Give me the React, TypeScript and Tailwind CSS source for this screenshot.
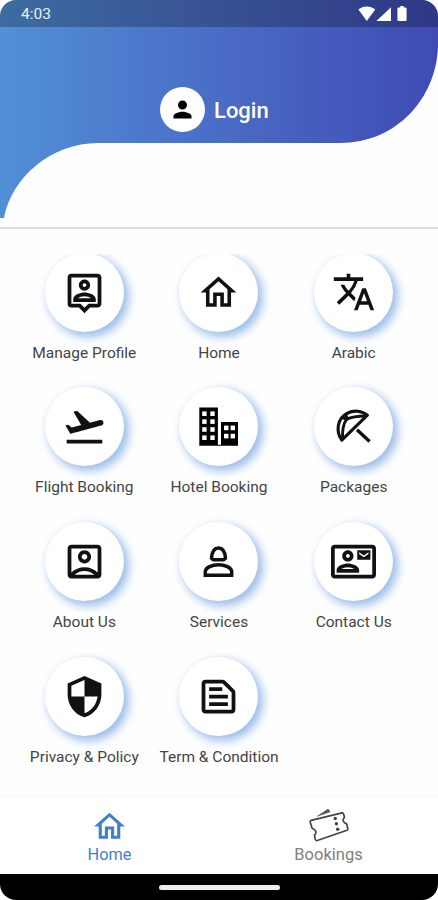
import type { ReactNode } from "react";
import {
  MdOutlineAccountBox,
  MdOutlineContactMail,
  MdOutlineHome,
  MdOutlinePersonPin,
  MdOutlineTextSnippet,
  MdFlightTakeoff,
  MdPerson,
  MdSecurity,
  MdTranslate,
} from "react-icons/md";

function StatusIcons() {
  return (
    <svg className="h-[16px] w-[52px] fill-white" viewBox="0 0 52 16">
      <path d="M0.4 3.6C5 -0.5 12.6 -0.5 17.2 3.6L8.8 15Z" />
      <path d="M33 1.2V15H18.4Z" />
      <path d="M42.3 0h3.4v1.400h1.600c.8 0 1.300.5 1.300 1.300v11c0 .8-.5 1.300-1.300 1.300h-6.600c-.8 0-1.300-.5-1.300-1.300v-11c0-.8.5-1.300 1.300-1.300h1.600z" />
    </svg>
  );
}

function HotelIcon() {
  const rows = [7.4, 15.3, 23.2, 31.4];
  return (
    <svg className="size-[45px]" viewBox="0 0 45 45">
      <path d="M3.300 3.500h18.600v38.300h-18.600zM21.500 40.800h4v1h-4zM25 18h17v23.800h-17z" />
      {rows.map((y) =>
        [6.2, 14.3].map((x) => (
          <rect key={`${x}-${y}`} x={x} y={y} width="4.400" height="4.600" fill="#fff" />
        )),
      )}
      {[28, 34.6].map((x) =>
        [21.6, 29.8].map((y) => (
          <rect key={`${x}-${y}`} x={x} y={y} width="4.400" height="4.600" fill="#fff" />
        )),
      )}
    </svg>
  );
}

function UmbrellaIcon() {
  return (
    <svg className="size-[45px]" viewBox="0 0 45 45" fill="none" stroke="currentColor" strokeWidth="3.100" strokeLinejoin="round">
      <path d="M10.800 36.200C4.300 27 6.500 14.500 16 9.400C23 5.700 31 6.700 36.400 11.200Z" />
      <path d="M11.500 35C11.200 26 12.500 19.500 15.500 15.400C20.500 12.800 27 12 35 12" strokeWidth="2.900" />
      <path d="M12 15 16 11 17 16z" strokeWidth="1" fill="currentColor" />
      <path d="M26 25.800 38.600 37.600" strokeWidth="3.400" />
    </svg>
  );
}

function ServicesIcon() {
  return (
    <svg className="size-[45px]" viewBox="0 0 45 45" fill="none" stroke="currentColor" strokeWidth="3.500">
      <path d="M17.200 20.800l-1.700-1.500c.4-6 2-10.300 7-10.300s6.600 4.300 7 10.300l-1.700 1.500z" strokeLinejoin="round" />
      <path d="M9.300 36.300v-3.700c0-4.200 7-6.900 13.200-6.900s13.200 2.700 13.200 6.900v3.700z" />
    </svg>
  );
}

function TicketIcon() {
  return (
    <svg className="h-[36px] w-[40px]" viewBox="0 0 40 36" fill="none" stroke="#444" strokeWidth="1.700" strokeLinejoin="round">
      <path d="M2.200 12.300 33 4.800q1.200-.2 1.500 1l1 3.400q-3.600 4.300 2.300 6.900l1 4.700q.2 1-.8 1.400L8.300 32.500q-1.600.4-2-1.100l-.9-4q4-4.400-2.300-7.200L1.300 14.500q-.4-1.700.9-2.200z" />
      <path d="M8.200 8.300 18.500 1.400q1.200-.5 2.200 1.700l.3.700z" fill="#555" strokeWidth=".5" />
      <g fill="#444" stroke="none">
        <circle cx="26.200" cy="10.500" r="1.700" />
        <circle cx="27.400" cy="15.800" r="1.700" />
        <circle cx="28.700" cy="21.200" r="1.700" />
      </g>
    </svg>
  );
}

const iconSize = "size-[45px]";

const items: { label: string; icon: ReactNode }[] = [
  { label: "Manage Profile", icon: <MdOutlinePersonPin className={iconSize} /> },
  { label: "Home", icon: <MdOutlineHome className="size-[43px]" /> },
  { label: "Arabic", icon: <MdTranslate className="size-[44px]" /> },
  { label: "Flight Booking", icon: <MdFlightTakeoff className={iconSize} /> },
  { label: "Hotel Booking", icon: <HotelIcon /> },
  { label: "Packages", icon: <UmbrellaIcon /> },
  { label: "About Us", icon: <MdOutlineAccountBox className={iconSize} /> },
  { label: "Services", icon: <ServicesIcon /> },
  { label: "Contact Us", icon: <MdOutlineContactMail className={iconSize} /> },
  { label: "Privacy & Policy", icon: <MdSecurity className={iconSize} /> },
  { label: "Term & Condition", icon: <MdOutlineTextSnippet className={iconSize} /> },
];

function MenuItem({ label, icon }: { label: string; icon: ReactNode }) {
  return (
    <div className="flex h-[134.8px] flex-col items-center">
      <div className="flex size-[79px] shrink-0 items-center justify-center rounded-full bg-white text-[#111] shadow-[4px_4px_10px_1px_rgba(88,145,222,0.6)]">
        {icon}
      </div>
      <span className="mt-[9px] text-[15.500px] leading-[24px] whitespace-nowrap text-[#444]">{label}</span>
    </div>
  );
}

export default function App() {
  return (
    <div className="h-[900px] w-[438px] overflow-hidden bg-white font-[Roboto,sans-serif]">
      <div className="flex h-full flex-col overflow-hidden rounded-[16px] bg-[#fefefe]">
        <header className="relative h-[229px] shrink-0 border-b-2 border-[#dedede]">
          <svg className="absolute inset-0 h-[227px] w-[438px]" viewBox="0 0 438 227">
            <defs>
              <linearGradient id="sky" x1="0" x2="1" y1="0" y2="0">
                <stop offset="0" stopColor="#5190d7" />
                <stop offset=".5" stopColor="#4a6cc6" />
                <stop offset="1" stopColor="#3f4bb3" />
              </linearGradient>
            </defs>
            <path d="M0 0H438V47C436 98 397 143 340 143H98C51 143 12 177 4 218H0Z" fill="url(#sky)" />
          </svg>
          <div className="relative flex h-[27px] items-center justify-between bg-black/25 pr-[28px] pl-[21px]">
            <span className="pt-[2px] text-[15.500px] text-white/90">4:03</span>
            <StatusIcons />
          </div>
          <div className="relative mt-[60px] flex items-center pl-[160px]">
            <div className="flex size-[45px] items-center justify-center rounded-full bg-white text-black">
              <MdPerson className="size-[27px]" />
            </div>
            <span className="mt-px ml-[9px] text-[22px] font-medium text-white">Login</span>
          </div>
        </header>

        <main className="mt-[25px] h-[542px] shrink-0 overflow-hidden">
          <div className="-mt-[1.500px] grid grid-cols-3 px-[17px]">
            {items.map((item) => (
              <MenuItem key={item.label} {...item} />
            ))}
          </div>
        </main>

        <nav className="grid h-[78px] shrink-0 grid-cols-2 border-t border-[#f8f8f8] bg-white text-[16px] leading-[20px]">
          <div className="flex flex-col items-center pt-[11px] text-[#3f7fce]">
            <MdOutlineHome className="size-[37px]" />
            <span className="text-[16.300px]">Home</span>
          </div>
          <div className="flex flex-col items-center pt-[11px] text-[#808080]">
            <TicketIcon />
            <span className="mt-px text-[16.500px]">Bookings</span>
          </div>
        </nav>

        <footer className="flex flex-1 items-center justify-center bg-black">
          <div className="h-[5px] w-[121px] rounded-full bg-[#eee]" />
        </footer>
      </div>
    </div>
  );
}
